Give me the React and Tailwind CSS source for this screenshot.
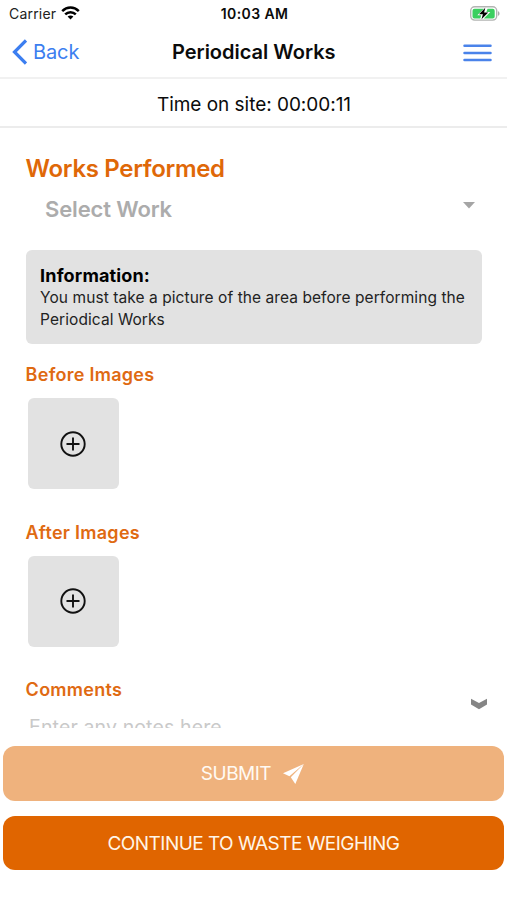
import { useState } from "react";

function StatusBar() {
  return (
    <div className="flex h-[27px] items-center justify-between pl-[9px] pr-[7px]">
      <div className="flex w-[120px] items-center gap-[5px]">
        <span className="text-[14px] tracking-[0.2px] text-[#222]">Carrier</span>
        <svg className="-mt-[2px]" width="19" height="14" viewBox="0 0 19 14" fill="none" stroke="#000" strokeWidth="2.5">
          <path d="M1.2 5.2C6 .4 13 .4 17.8 5.2" />
          <path d="M4.2 8.4c3-3 7.600-3 10.600 0" />
          <path d="M9.500 13.500L6.600 10.600c1.700-1.500 4.100-1.500 5.800 0z" fill="#000" stroke="none" />
        </svg>
      </div>
      <span className="text-[14px] font-semibold tracking-[0.4px]">10:03 AM</span>
      <div className="flex w-[120px] justify-end">
        <svg className="-mt-[1px]" width="30" height="15" viewBox="0 0 30 15">
          <rect x=".7" y=".7" width="26" height="13.400" rx="4" fill="#fff" stroke="#b2b4b2" strokeWidth="1.400" />
          <path d="M4.500 2.800h9.300L7.300 9.200h3.900l-.9 3.200H4.500a2 2 0 0 1-2-2V4.800a2 2 0 0 1 2-2z" fill="#3bcf5f" />
          <path d="M17.500 2.800h5.200a2 2 0 0 1 2 2v5.600a2 2 0 0 1-2 2h-8.900l6.500-6.500h-3.900z" fill="#3bcf5f" />
          <path d="M28 5.200c2 .7 2 3.900 0 4.600z" fill="#a9aca9" />
          <path d="M15.300 1.800L9 8.300h3.900L11.500 13.200l6.700-6.700h-4.100z" fill="#000" />
        </svg>
      </div>
    </div>
  );
}

function Header() {
  return (
    <div className="flex h-[52px] items-center justify-between border-b-2 border-[#f1f1f1] pl-3 pr-[15.500px]">
      <button className="flex w-[102px] items-center gap-[6px] text-[#3c7ef0]">
        <svg width="15" height="26" viewBox="0 0 15 26" fill="none" stroke="currentColor" strokeWidth="3.200">
          <path d="M14 1.500L2.500 13 14 24.500" />
        </svg>
        <span className="text-[20px] leading-6 tracking-[-0.1px]">Back</span>
      </button>
      <h1 className="pl-[2px] text-[20px] font-semibold leading-6">Periodical Works</h1>
      <button className="flex w-[100px] justify-end pt-[2px]" aria-label="Menu">
        <svg width="29" height="18" viewBox="0 0 29 18" stroke="#4a83ea" strokeWidth="2.500" strokeLinecap="round">
          <path d="M1.500 1.700h26M1.500 8.900h26M1.500 16.100h26" />
        </svg>
      </button>
    </div>
  );
}

function ImagePicker({ title }) {
  return (
    <section className="h-[157.500px]">
      <h3 className="text-[18px] font-semibold leading-6 tracking-[0.27px] text-[#df6a12]">{title}</h3>
      <button className="ml-[2px] mt-[11px] flex h-[91px] w-[91.500px] items-center justify-center rounded-[6px] bg-[#e2e2e2]">
        <svg width="26" height="26" viewBox="0 0 26 26" fill="none" stroke="#111" strokeWidth="1.900">
          <circle cx="13" cy="13" r="11.700" />
          <path d="M13 6.500v13M6.500 13h13" />
        </svg>
      </button>
    </section>
  );
}

export default function App() {
  const [comments, setComments] = useState("");

  return (
    <main className="flex h-[900px] w-[507px] flex-col overflow-hidden bg-white font-[Inter,sans-serif] text-[#0b0b0b]">
      <StatusBar />
      <Header />

      <div className="flex h-[49px] shrink-0 items-center justify-center border-b-2 border-[#ececec] pl-[1px] pt-[5px]">
        <span className="text-[19px] tracking-[-0.03px]">Time on site: 00:00:11</span>
      </div>

      {/* Form */}
      <div className="h-[600px] shrink-0 overflow-hidden pl-[25.600px] pr-[24.700px] pt-[26px]">
        <div>
          <h2 className="text-[24px] font-semibold leading-[30px] tracking-[-0.33px] text-[#df6808]">Works Performed</h2>
          <div className="flex h-[51px] items-start justify-between pl-[19.500px] pr-[6px] pt-[11px]">
            <span className="text-[22px] font-semibold leading-7 tracking-[-0.15px] text-[#acacac]">Select Work</span>
            <svg className="mt-[7px]" width="13" height="7" viewBox="0 0 13 7" fill="#a5a5a5">
              <path d="M0 0h12L6 6.500z" />
            </svg>
          </div>
        </div>

        <div className="mt-[15px] h-[94px] rounded-[6px] bg-[#e2e2e2] pl-[14.500px] pr-[10px] pt-[15px]">
          <h3 className="text-[18px] font-bold leading-[22px] tracking-[0.15px] text-black">Information:</h3>
          <p className="text-[15.500px] leading-[22px] tracking-[0.07px] text-[#222]">
            You must take a picture of the area before performing the Periodical Works
          </p>
        </div>

        <div className="pt-[19px]">
          <ImagePicker title="Before Images" />
          <ImagePicker title="After Images" />
          <div className="flex justify-between">
            <h3 className="text-[18px] font-semibold leading-6 tracking-[0.27px] text-[#df6a12]">Comments</h3>
            <svg className="mr-[-6px] mt-5" width="17" height="12" viewBox="0 0 17 12" fill="#858585">
              <path d="M0 .8l8 4.200 8-4.200v5.700l-8 4.700-8-4.700z" />
            </svg>
          </div>
          <textarea
            value={comments}
            onChange={(e) => setComments(e.target.value)}
            placeholder="Enter any notes here"
            className="mt-[5px] block h-[60px] w-full resize-none pl-[3.500px] text-[19.500px] leading-6 tracking-[0.13px] outline-none placeholder:text-[#c9c9c9]"
          />
        </div>
      </div>

      {/* Actions */}
      <div className="flex flex-col gap-[15px] px-[3px] pt-[18px]">
        <button className="flex h-[55px] items-center justify-center gap-3 rounded-[12px] bg-[#efb27d] pr-[2px] text-[19px] tracking-[-0.5px] text-[#fffaf3]">
          <span className="pt-[2px]">SUBMIT</span>
          <svg width="21" height="20" viewBox="0 0 21 20" fill="#fff">
            <path d="M0 9.200L20.800 0 6.400 12.200z" />
            <path d="M20.800 0L12.300 20 7.800 13.200z" />
          </svg>
        </button>
        <button className="h-[54px] rounded-[12px] bg-[#e06500] pt-[3px] text-[19px] tracking-[-0.54px] text-[#fff5e8]">
          CONTINUE TO WASTE WEIGHING
        </button>
      </div>
    </main>
  );
}
